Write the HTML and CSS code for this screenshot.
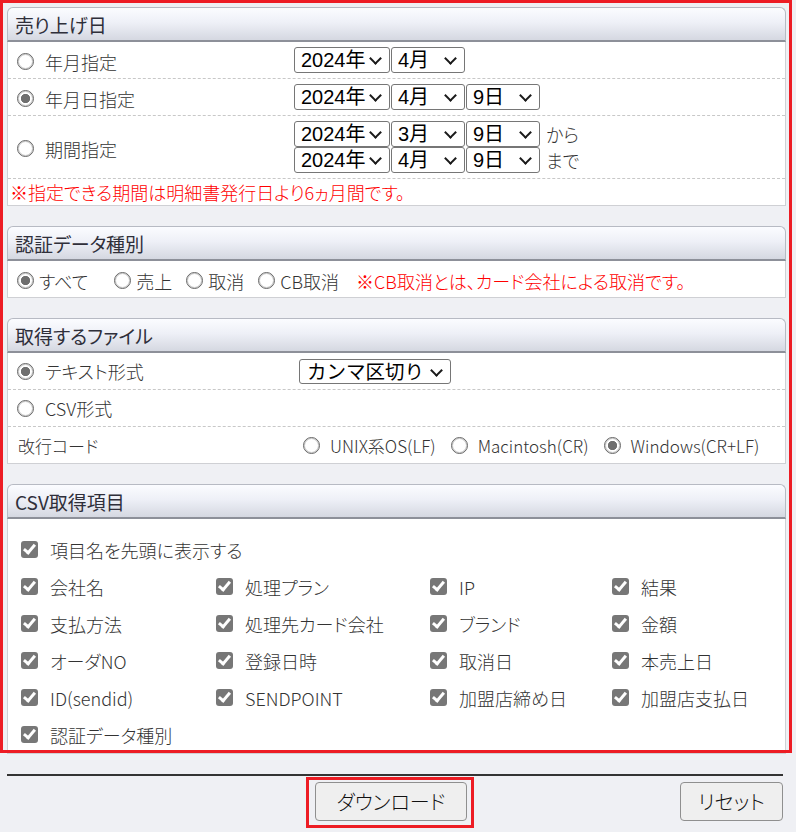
FILE: index.html
```html
<!DOCTYPE html>
<html lang="ja">
<head>
    <meta charset="UTF-8">
    <meta name="viewport" content="width=device-width, initial-scale=1.0">
    <title>CSVダウンロード</title>
    <link rel="stylesheet" href="styles.css">
</head>
<body>
<div class="page">
    <div class="section">
        <div class="sec-head">売り上げ日</div>
        <div class="sec-body">
            <div class="row date-row">
                <label class="opt"><input type="radio" name="term"> 年月指定</label>
                <div class="sel-line">
                    <span class="sel"><select class="sel-y"><option>2023年</option><option selected>2024年</option></select></span>
                    <span class="sel"><select class="sel-m"><option>3月</option><option selected>4月</option></select></span>
                </div>
            </div>
            <div class="row date-row">
                <label class="opt"><input type="radio" name="term" checked> 年月日指定</label>
                <div class="sel-line">
                    <span class="sel"><select class="sel-y"><option>2023年</option><option selected>2024年</option></select></span>
                    <span class="sel"><select class="sel-m"><option>3月</option><option selected>4月</option></select></span>
                    <span class="sel"><select class="sel-d"><option>8日</option><option selected>9日</option></select></span>
                </div>
            </div>
            <div class="row date-row tall">
                <label class="opt"><input type="radio" name="term"> 期間指定</label>
                <div>
                    <div class="sel-line">
                        <span class="sel"><select class="sel-y"><option>2023年</option><option selected>2024年</option></select></span>
                        <span class="sel"><select class="sel-m"><option selected>3月</option><option>4月</option></select></span>
                        <span class="sel"><select class="sel-d"><option>8日</option><option selected>9日</option></select></span>
                        <span class="range">から</span>
                    </div>
                    <div class="sel-line">
                        <span class="sel"><select class="sel-y"><option>2023年</option><option selected>2024年</option></select></span>
                        <span class="sel"><select class="sel-m"><option>3月</option><option selected>4月</option></select></span>
                        <span class="sel"><select class="sel-d"><option>8日</option><option selected>9日</option></select></span>
                        <span class="range">まで</span>
                    </div>
                </div>
            </div>
            <div class="note">※指定できる期間は明細書発行日より6ヵ月間です。</div>
        </div>
    </div>

    <div class="section">
        <div class="sec-head">認証データ種別</div>
        <div class="sec-body kind-row">
            <label class="kind first"><input type="radio" name="kind" checked>すべて</label>
            <label class="kind"><input type="radio" name="kind">売上</label>
            <label class="kind"><input type="radio" name="kind">取消</label>
            <label class="kind"><input type="radio" name="kind">CB取消</label>
            <span class="warn">※CB取消とは、カード会社による取消です。</span>
        </div>
    </div>

    <div class="section">
        <div class="sec-head">取得するファイル</div>
        <div class="sec-body">
            <div class="row file-row">
                <label class="opt"><input type="radio" name="file" checked> テキスト形式</label>
                <div class="sel-line"><span class="sel"><select class="sel-sep"><option selected>カンマ区切り</option><option>タブ区切り</option></select></span></div>
            </div>
            <div class="row file-row">
                <label class="opt"><input type="radio" name="file"> CSV形式</label>
                <div></div>
            </div>
            <div class="row file-row last">
                <span class="code-label">改行コード</span>
                <div class="code-opts">
                    <label class="code"><input type="radio" name="nl">UNIX系OS(LF)</label>
                    <label class="code"><input type="radio" name="nl">Macintosh(CR)</label>
                    <label class="code"><input type="radio" name="nl" checked>Windows(CR+LF)</label>
                </div>
            </div>
        </div>
    </div>

    <div class="section">
        <div class="sec-head">CSV取得項目</div>
        <div class="sec-body items">
            <label class="item wide"><input type="checkbox" checked>項目名を先頭に表示する</label>
            <label class="item"><input type="checkbox" checked>会社名</label>
            <label class="item"><input type="checkbox" checked>処理プラン</label>
            <label class="item"><input type="checkbox" checked>IP</label>
            <label class="item"><input type="checkbox" checked>結果</label>
            <label class="item"><input type="checkbox" checked>支払方法</label>
            <label class="item"><input type="checkbox" checked>処理先カード会社</label>
            <label class="item"><input type="checkbox" checked>ブランド</label>
            <label class="item"><input type="checkbox" checked>金額</label>
            <label class="item"><input type="checkbox" checked>オーダNO</label>
            <label class="item"><input type="checkbox" checked>登録日時</label>
            <label class="item"><input type="checkbox" checked>取消日</label>
            <label class="item"><input type="checkbox" checked>本売上日</label>
            <label class="item"><input type="checkbox" checked>ID(sendid)</label>
            <label class="item"><input type="checkbox" checked>SENDPOINT</label>
            <label class="item"><input type="checkbox" checked>加盟店締め日</label>
            <label class="item"><input type="checkbox" checked>加盟店支払日</label>
            <label class="item"><input type="checkbox" checked>認証データ種別</label>
        </div>
    </div>

    <div class="rule"></div>
    <div class="actions">
        <span class="focus-box"><button class="btn btn-dl">ダウンロード</button></span>
        <button class="btn btn-reset">リセット</button>
    </div>

    <div class="mark"></div>
</div>
</body>
</html>
```

FILE: styles.css
```css
body {
    margin: 0;
    background: #eff0f4;
    font-family: "Noto Sans CJK JP", sans-serif;
    font-feature-settings: "palt";
    font-size: 18px;
    font-weight: 300;
    color: #333;
}
.page {
    position: relative;
    padding: 7px 10px 0 7px;
}
.section {
    margin-bottom: 20px;
}
.sec-head {
    height: 35px;
    box-sizing: border-box;
    padding-left: 7px;
    line-height: 33px;
    font-size: 19px;
    font-weight: 400;
    color: #2f2f3a;
    border: 1px solid #b7bac3;
    border-bottom: 2px solid #8d9099;
    border-radius: 6px 6px 0 0;
    background: linear-gradient(#fbfcff, #eef0f7 45%, #d5d8e1);
}
.sec-body {
    background: #fff;
    border: 1px solid #cfd0d4;
    border-top: none;
}
input[type=radio] {
    appearance: none;
    flex: none;
    width: 17px;
    height: 17px;
    margin: 0;
    border: 1px solid #666;
    border-radius: 50%;
    background: #fff;
    box-shadow: inset 0 0 0 1px rgba(110, 110, 110, 0.35);
}
input[type=radio]:checked {
    background: radial-gradient(circle, #6f6f6f 0 4.3px, #fff 5px);
}
input[type=checkbox] {
    appearance: none;
    position: relative;
    flex: none;
    width: 17px;
    height: 17px;
    margin: 0;
    border-radius: 3px;
    background: #777;
}
input[type=checkbox]:checked::after {
    content: "";
    position: absolute;
    left: 5px;
    top: 1px;
    width: 4px;
    height: 9px;
    border: solid #fff;
    border-width: 0 3px 3px 0;
    transform: rotate(40deg);
}
.row {
    display: grid;
    align-items: center;
    min-height: 36px;
    border-bottom: 1px dashed #c8c8c8;
}
.date-row {
    grid-template-columns: 286px 1fr;
}
.date-row .opt {
    padding-top: 3px;
}
.date-row.tall {
    padding: 5px 0;
}
.file-row {
    grid-template-columns: 291px 1fr;
}
.file-row.last {
    border-bottom: none;
}
.opt {
    display: flex;
    align-items: center;
    line-height: 24px;
}
.opt input {
    margin: 0 11px 0 9px;
}
.sel-line {
    display: flex;
    align-items: center;
    gap: 1px;
}
.sel {
    position: relative;
    display: block;
}
.sel::after {
    content: "";
    position: absolute;
    right: 10px;
    top: 7px;
    width: 7px;
    height: 7px;
    border: solid #1a1a1a;
    border-width: 0 2px 2px 0;
    transform: rotate(45deg);
    pointer-events: none;
}
select {
    display: block;
    appearance: none;
    height: 26px;
    box-sizing: border-box;
    padding: 0 0 0 6px;
    font-family: "Liberation Sans", "Noto Sans CJK JP", sans-serif;
    font-size: 20px;
    font-weight: 400;
    line-height: 24px;
    color: #000;
    background: #fff;
    border: 1px solid #767676;
    border-radius: 3px;
}
.sel-y {
    width: 96px;
}
.sel-m,
.sel-d {
    width: 74px;
}
.range {
    margin-left: 5px;
    line-height: 26px;
}
.sel-sep {
    width: 152px;
    height: 25px;
    padding-left: 7px;
    font-size: 19.5px;
}
.note {
    height: 26px;
    line-height: 26px;
    padding-left: 2px;
    color: #f00;
}
.kind-row {
    display: flex;
    align-items: center;
    height: 37px;
    padding: 3px 0 0 9px;
    box-sizing: border-box;
}
.kind {
    display: flex;
    align-items: center;
    margin-right: 14px;
}
.kind.first {
    margin-right: 26px;
}
.kind input {
    margin-right: 5px;
}
.warn {
    margin-left: 3px;
    color: #f00;
}
.code-label {
    padding-left: 10px;
    font-size: 17px;
}
.code-opts {
    display: flex;
    align-items: center;
    padding-left: 4px;
    font-size: 17px;
}
.code {
    display: flex;
    align-items: center;
    margin-right: 15px;
}
.code input {
    margin-right: 10px;
}
.items {
    display: grid;
    grid-template-columns: 195px 214px 182px 1fr;
    padding-top: 12px;
}
.item {
    display: flex;
    align-items: center;
    height: 37px;
    padding-left: 13px;
}
.item.wide {
    grid-column: 1 / -1;
}
.item input {
    margin-right: 12px;
}
.rule {
    height: 2px;
    margin: 16px 3px 0 0;
    background: #333;
}
.actions {
    display: grid;
    grid-template-columns: 299px auto 1fr;
    align-items: start;
    margin-top: 1px;
}
.focus-box {
    grid-column: 2;
    display: block;
    padding: 2px 4px 4px 6px;
    border: 3px solid #ed1c24;
}
.btn {
    height: 39px;
    font-family: inherit;
    font-feature-settings: "palt";
    font-size: 20px;
    font-weight: 300;
    color: #111;
    background: #efefef;
    border: 1px solid #8f8f8f;
    border-radius: 4px;
}
.btn-dl {
    width: 152px;
}
.btn-reset {
    justify-self: end;
    width: 103px;
    margin: 5px 3px 0 0;
}
.mark {
    position: absolute;
    left: 0;
    top: 0;
    width: 792px;
    height: 753px;
    box-sizing: border-box;
    border: 3px solid #ed1c24;
    pointer-events: none;
}
```
